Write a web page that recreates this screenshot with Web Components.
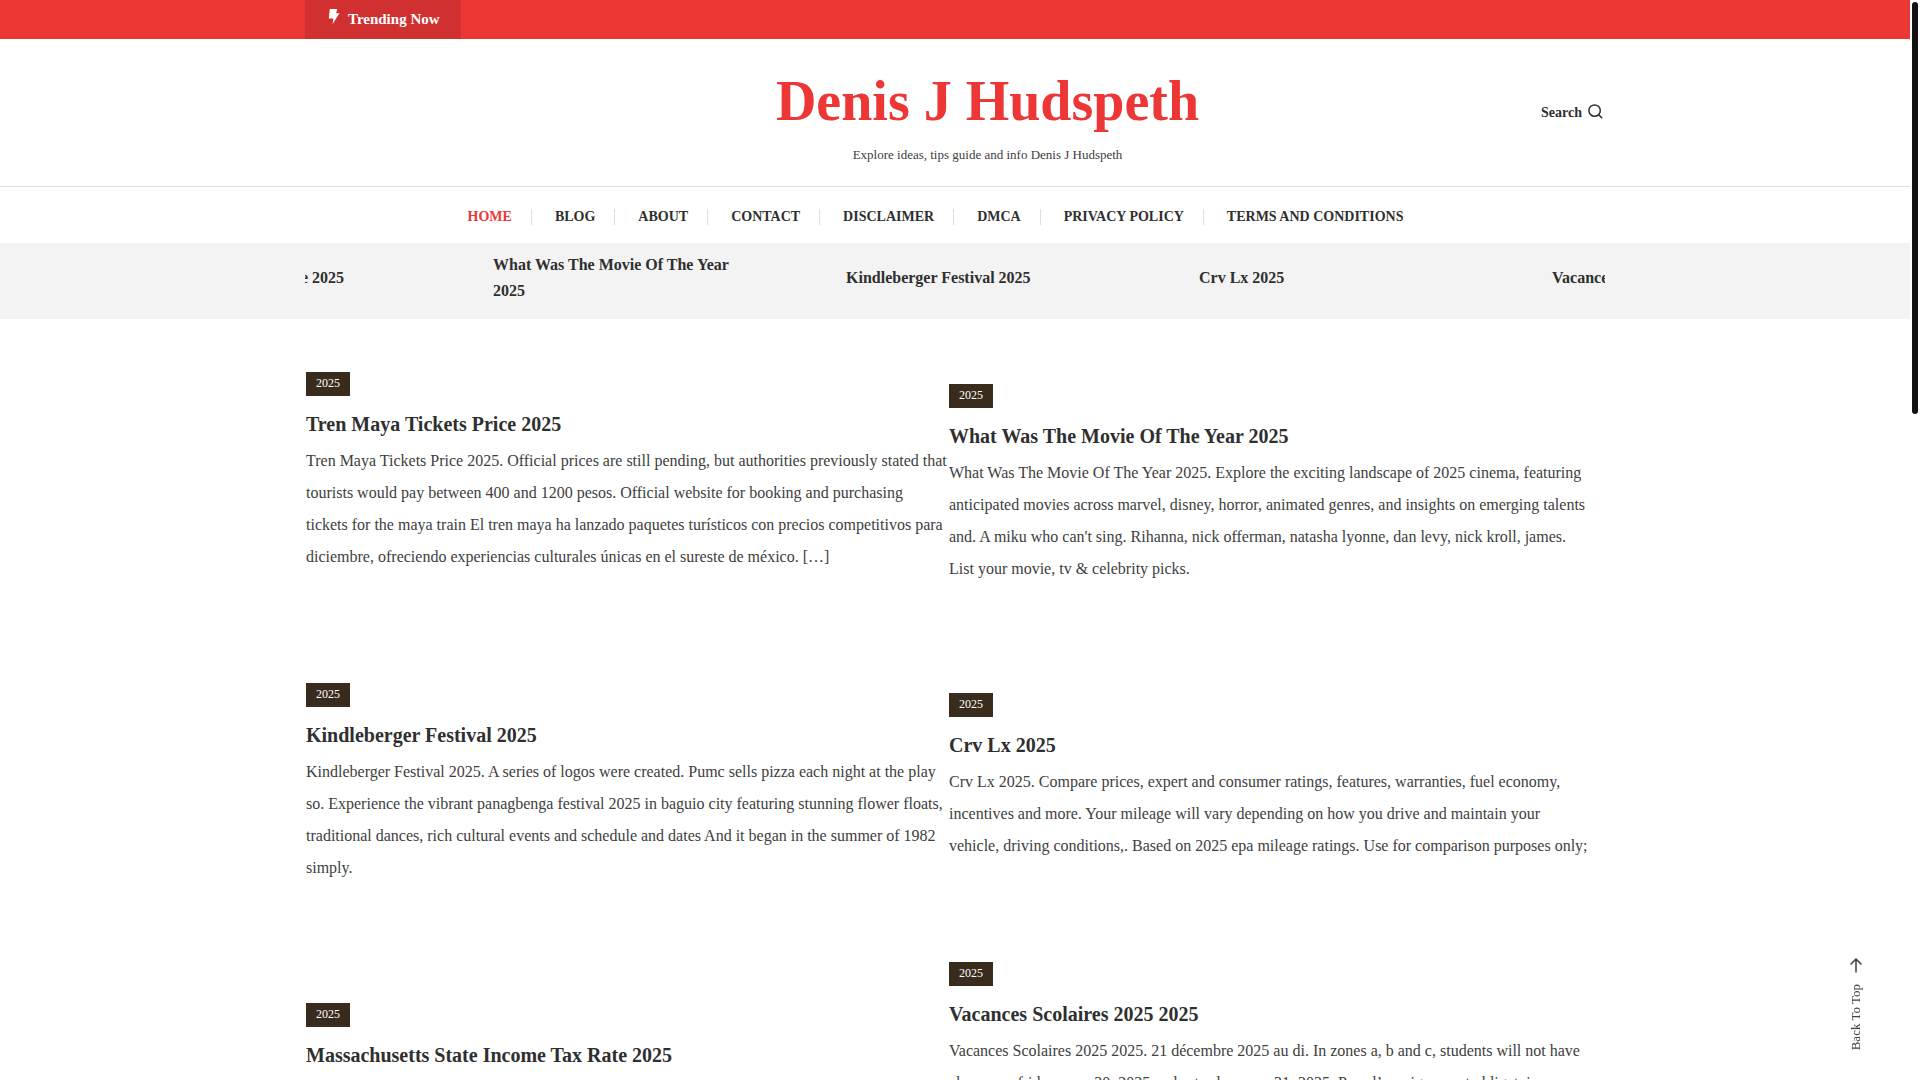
<!DOCTYPE html>
<html lang="en">
<head>
<meta charset="utf-8">
<meta name="viewport" content="width=device-width, initial-scale=1">
<title>Denis J Hudspeth</title>
<style>
	:root {
		--red: #ed3636;
		--red-dark: #d03030;
		--ink: #2f2f2f;
		--text: #404040;
		--line: #dfdfdf;
		--wrap: 1300px;
	}
	html {
		height: 100%;
		overflow: hidden;
	}
	body {
		margin: 0;
		padding-right: 10px;
		height: 100%;
		overflow: hidden;
		box-sizing: border-box;
		background: #fff;
		color: var(--text);
		font: 16px/32px "Liberation Serif", "Times New Roman", serif;
	}
</style>
</head>
<body>
	<trending-bar>Trending Now</trending-bar>

	<site-header>
		<a slot="title" href="#">Denis J Hudspeth</a>
		<span slot="tagline">Explore ideas, tips guide and info Denis J Hudspeth</span>
	</site-header>

	<site-nav>
		<a href="#" class="current">HOME</a>
		<a href="#">BLOG</a>
		<a href="#">ABOUT</a>
		<a href="#">CONTACT</a>
		<a href="#">DISCLAIMER</a>
		<a href="#">DMCA</a>
		<a href="#">PRIVACY POLICY</a>
		<a href="#">TERMS AND CONDITIONS</a>
	</site-nav>

	<news-ticker>
		<a href="#">Tren Maya Tickets Price 2025</a>
		<a href="#">What Was The Movie Of The Year 2025</a>
		<a href="#">Kindleberger Festival 2025</a>
		<a href="#">Crv Lx 2025</a>
		<a href="#">Vacances Scolaires 2025 2025</a>
	</news-ticker>

	<post-columns>
		<post-card slot="left" category="2025" heading="Tren Maya Tickets Price 2025">Tren Maya Tickets Price 2025. Official prices are still pending, but authorities previously stated that tourists would pay between 400 and 1200 pesos. Official website for booking and purchasing tickets for the maya train El tren maya ha lanzado paquetes turísticos con precios competitivos para diciembre, ofreciendo experiencias culturales únicas en el sureste de méxico. […]</post-card>
		<post-card slot="left" lead="110" category="2025" heading="Kindleberger Festival 2025">Kindleberger Festival 2025. A series of logos were created. Pumc sells pizza each night at the play so. Experience the vibrant panagbenga festival 2025 in baguio city featuring stunning flower floats, traditional dances, rich cultural events and schedule and dates And it began in the summer of 1982 simply.</post-card>
		<post-card slot="left" lead="119" category="2025" heading="Massachusetts State Income Tax Rate 2025"></post-card>

		<post-card slot="right" lead="12" category="2025" heading="What Was The Movie Of The Year 2025">What Was The Movie Of The Year 2025. Explore the exciting landscape of 2025 cinema, featuring anticipated movies across marvel, disney, horror, animated genres, and insights on emerging talents and. A miku who can't sing. Rihanna, nick offerman, natasha lyonne, dan levy, nick kroll, james. List your movie, tv &amp; celebrity picks.</post-card>
		<post-card slot="right" lead="108" category="2025" heading="Crv Lx 2025">Crv Lx 2025. Compare prices, expert and consumer ratings, features, warranties, fuel economy, incentives and more. Your mileage will vary depending on how you drive and maintain your vehicle, driving conditions,. Based on 2025 epa mileage ratings. Use for comparison purposes only;</post-card>
		<post-card slot="right" lead="100" category="2025" heading="Vacances Scolaires 2025 2025">Vacances Scolaires 2025 2025. 21 décembre 2025 au di. In zones a, b and c, students will not have classes on friday, may 30, 2025 and saturday, may 31, 2025. Pour l’enseignement obligatoire.</post-card>
	</post-columns>

	<back-to-top>Back To Top</back-to-top>
	<scroll-thumb></scroll-thumb>

<script>
class TrendingBar extends HTMLElement {
	constructor() {
		super();
		this.attachShadow({mode: 'open'});
		this.shadowRoot.innerHTML = `
			<style>
				:host {
					display: block;
					background: var(--red);
				}
				.wrap {
					display: flex;
					max-width: var(--wrap);
					margin: 0 auto;
				}
				.label {
					display: flex;
					gap: 8px;
					padding: 0 21px 0 23px;
					background: var(--red-dark);
					color: #fff;
					font-size: 15px;
					font-weight: bold;
					line-height: 39px;
				}
				svg {
					margin-top: 8px;
				}
			</style>
			<div class="wrap">
				<div class="label">
					<svg width="12" height="17" viewBox="0 0 12 17" aria-hidden="true">
						<path d="M1.800 1h7.400L8.200 5.200H11.500L4.600 16l.8-5.400H.8z" fill="#fff"/>
					</svg>
					<span><slot></slot></span>
				</div>
			</div>
		`;
	}
}

class SiteHeader extends HTMLElement {
	constructor() {
		super();
		this.attachShadow({mode: 'open'});
		this.shadowRoot.innerHTML = `
			<style>
				:host {
					display: block;
					border-bottom: 1px solid var(--line);
				}
				.wrap {
					display: grid;
					grid-template-columns: 130px 1fr 65px;
					align-items: center;
					max-width: var(--wrap);
					margin: 0 auto;
				}
				.brand {
					grid-column: 2;
					padding: 30px 0 21px;
					text-align: center;
				}
				h1 {
					margin: 0 0 12px;
					color: var(--red);
					font-size: 56px;
					line-height: 64px;
				}
				p {
					margin: 0;
					font-size: 13px;
					line-height: 20px;
				}
				::slotted(a) {
					color: inherit;
					text-decoration: none;
				}
				button {
					display: flex;
					align-items: center;
					justify-self: end;
					gap: 6px;
					padding: 0 2px 0 0;
					border: 0;
					background: none;
					color: var(--ink);
					font: bold 14px/20px "Liberation Serif", "Times New Roman", serif;
					cursor: pointer;
				}
				svg {
					margin-bottom: 2px;
				}
			</style>
			<div class="wrap">
				<div class="brand">
					<h1><slot name="title"></slot></h1>
					<p><slot name="tagline"></slot></p>
				</div>
				<button type="button">
					Search
					<svg width="15" height="15" viewBox="0 0 15 15" fill="none" stroke="currentColor" stroke-width="1.5" aria-hidden="true">
						<circle cx="6.600" cy="6.600" r="5.700"/>
						<path d="M10.600 10.600 14.200 14.200"/>
					</svg>
				</button>
			</div>
		`;
	}
}

class SiteNav extends HTMLElement {
	constructor() {
		super();
		this.attachShadow({mode: 'open'});
		this.shadowRoot.innerHTML = `
			<style>
				:host {
					display: block;
				}
				nav {
					display: flex;
					justify-content: center;
					gap: 23px;
					padding: 22px 39px 18px 0;
				}
				::slotted(a) {
					padding-right: 19px;
					border-right: 1px solid var(--line);
					color: var(--ink);
					font-size: 14px;
					font-weight: bold;
					line-height: 16px;
					text-decoration: none;
				}
				::slotted(a:last-child) {
					padding-right: 0;
					border-right: 0;
				}
				::slotted(.current) {
					color: var(--red);
				}
			</style>
			<nav><slot></slot></nav>
		`;
	}
}

class NewsTicker extends HTMLElement {
	constructor() {
		super();
		this.attachShadow({mode: 'open'});
		this.shadowRoot.innerHTML = `
			<style>
				:host {
					display: block;
					background: #f3f3f3;
				}
				.view {
					max-width: var(--wrap);
					margin: 0 auto;
					overflow: hidden;
				}
				.track {
					display: flex;
					align-items: center;
					margin-left: -165px;
					padding: 9px 0 15px;
				}
				::slotted(a) {
					flex: 0 0 353px;
					box-sizing: border-box;
					padding-right: 100px;
					color: var(--ink);
					font-weight: bold;
					line-height: 26px;
					text-decoration: none;
				}
			</style>
			<div class="view">
				<div class="track"><slot></slot></div>
			</div>
		`;
	}
}

class PostColumns extends HTMLElement {
	constructor() {
		super();
		this.attachShadow({mode: 'open'});
		this.shadowRoot.innerHTML = `
			<style>
				:host {
					display: block;
				}
				main {
					display: grid;
					grid-template-columns: 1fr 1fr;
					max-width: var(--wrap);
					margin: 0 auto;
					padding: 53px 13px 60px 1px;
					box-sizing: border-box;
				}
			</style>
			<main>
				<div><slot name="left"></slot></div>
				<div><slot name="right"></slot></div>
			</main>
		`;
	}
}

class PostCard extends HTMLElement {
	constructor() {
		super();
		this.attachShadow({mode: 'open'});
	}

	connectedCallback() {
		this.render();
	}

	render() {
		const category = this.getAttribute('category') || '';
		const heading = this.getAttribute('heading') || '';
		const lead = parseInt(this.getAttribute('lead')) || 0;

		this.shadowRoot.innerHTML = `
			<style>
				:host {
					display: block;
					padding: ${lead}px 1px 0 0;
				}
				a {
					text-decoration: none;
				}
				.category {
					display: block;
					width: fit-content;
					padding: 0 10px 2px;
					background: #392c1d;
					color: #fff;
					font-size: 12px;
					line-height: 22px;
				}
				h2 {
					margin: 14px 0 7px;
					font-size: 20px;
					line-height: 28px;
				}
				h2 a {
					color: var(--ink);
				}
				p {
					margin: 0;
				}
			</style>
			<article>
				<a class="category" href="#">${category}</a>
				<h2><a href="#">${heading}</a></h2>
				<p><slot></slot></p>
			</article>
		`;
	}
}

class BackToTop extends HTMLElement {
	constructor() {
		super();
		this.attachShadow({mode: 'open'});
		this.shadowRoot.innerHTML = `
			<style>
				:host {
					position: fixed;
					right: 54px;
					bottom: 30px;
				}
				button {
					display: flex;
					flex-direction: column;
					align-items: center;
					gap: 11px;
					padding: 0;
					border: 0;
					background: none;
					color: var(--text);
					font: 13px/20px "Liberation Serif", "Times New Roman", serif;
					cursor: pointer;
				}
				span {
					writing-mode: vertical-rl;
					transform: rotate(180deg);
				}
			</style>
			<button type="button">
				<svg width="14" height="16" viewBox="0 0 14 16" fill="none" stroke="currentColor" stroke-width="1.5" aria-hidden="true">
					<path d="M7 15.500V2M1.500 7.500 7 2l5.500 5.500"/>
				</svg>
				<span><slot></slot></span>
			</button>
		`;
		this.shadowRoot.querySelector('button').addEventListener('click', () => {
			document.body.scrollTo({top: 0, behavior: 'smooth'});
		});
	}
}

class ScrollThumb extends HTMLElement {
	constructor() {
		super();
		this.attachShadow({mode: 'open'});
		this.shadowRoot.innerHTML = `
			<style>
				:host {
					position: fixed;
					top: 2px;
					right: 2px;
					width: 6px;
					height: 412px;
					border-radius: 3px;
					background: #111;
				}
			</style>
		`;
	}
}

customElements.define('trending-bar', TrendingBar);
customElements.define('site-header', SiteHeader);
customElements.define('site-nav', SiteNav);
customElements.define('news-ticker', NewsTicker);
customElements.define('post-columns', PostColumns);
customElements.define('post-card', PostCard);
customElements.define('back-to-top', BackToTop);
customElements.define('scroll-thumb', ScrollThumb);
</script>
</body>
</html>
